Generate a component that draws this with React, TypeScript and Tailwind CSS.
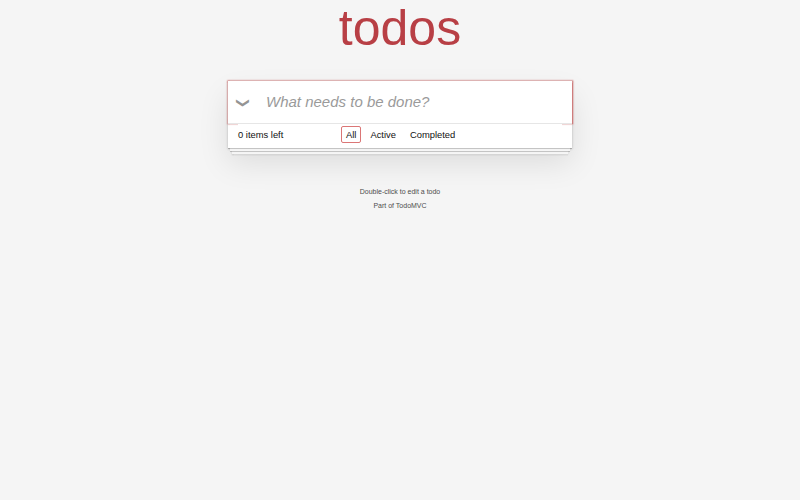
import React from "react";

export default function App() {
  return (
    <div className="h-[500px] w-full overflow-hidden bg-[#f5f5f5] pt-[81px] font-['Liberation_Sans',Arial,sans-serif] text-[#111111] leading-[1.4em]">
      <div className="mx-auto w-[344px]">
        <section className="relative bg-white shadow-[0_1px_2.5px_0_rgba(0,0,0,0.2),0_15px_31px_0_rgba(0,0,0,0.1)]">
          <h1 className="absolute top-[-88px] w-full text-center text-[50px] font-normal leading-[1.4em] text-[#b83f45]">
            todos
          </h1>
          <div className="relative flex h-[42px] items-center bg-white shadow-[0_0_1.5px_1.5px_#CF7D7D]">
            <span className="absolute left-[7px] top-[12px] flex h-[20px] w-[16px] rotate-90 items-center justify-center font-['DejaVu_Sans',sans-serif] text-[13px] text-[#949494]">
              ❯
            </span>
            <span className="pl-[38px] text-[15px] italic text-[#9a9a9a]">What needs to be done?</span>
          </div>
          <footer className="relative h-[25px] border-t border-[#e6e6e6] px-[10px] text-[9.4px]">
            <div className="pointer-events-none absolute bottom-0 left-0 right-0 h-[30px] overflow-hidden shadow-[0_0.6px_0.6px_rgba(0,0,0,0.2),0_5px_0_-2px_#f6f6f6,0_5.6px_0.6px_-2px_rgba(0,0,0,0.2),0_10px_0_-3.75px_#f6f6f6,0_10.6px_1.25px_-3.75px_rgba(0,0,0,0.2)]" />
            <div className="relative flex h-full items-center bg-white pb-[1px]">
              <span className="w-[99px] text-left">0 items left</span>
              <ul className="ml-[2px] flex items-center">
                <li>
                  <span className="mx-[2px] rounded-[2px] border border-solid border-[#DB7676] px-[4px] py-[2px]">All</span>
                </li>
                <li>
                  <span className="mx-[2px] rounded-[2px] border border-solid border-transparent px-[4px] py-[2px]">Active</span>
                </li>
                <li>
                  <span className="mx-[2px] rounded-[2px] border border-solid border-transparent px-[4px] py-[2px]">Completed</span>
                </li>
              </ul>
            </div>
          </footer>
        </section>
        <footer className="mt-[40px] text-center text-[7px] leading-none text-[#4d4d4d]">
          <p className="my-[7px]">Double-click to edit a todo</p>
          <p className="my-[7px]">Part of TodoMVC</p>
        </footer>
      </div>
    </div>
  );
}
